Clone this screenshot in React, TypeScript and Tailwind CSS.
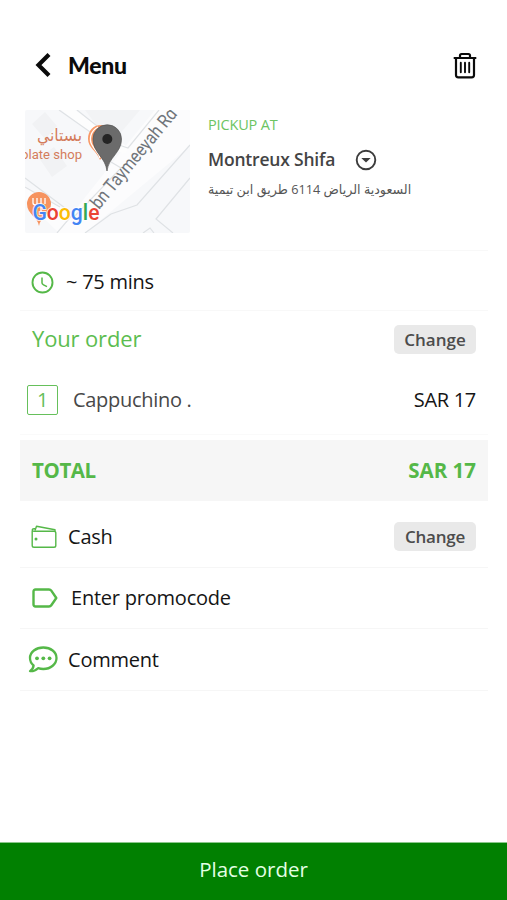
import type { ReactNode } from 'react';

const GREEN = '#55b848';

function BackIcon() {
  return (
    <svg width="18" height="26" viewBox="0 0 18 26" fill="none" stroke="#0b0b0b" strokeWidth="4.200">
      <path d="M15 2.500 4.500 13l10.500 10.500" />
    </svg>
  );
}

function TrashIcon() {
  return (
    <svg width="24" height="27" viewBox="0 0 24 27" fill="none" stroke="#0b0b0b" strokeWidth="2.200">
      <path d="M.7 6h22.600M7 6V3.600Q7 2 8.600 2h6.800Q17 2 17 3.600V6" />
      <path d="M3 6v17q0 2.300 2.300 2.300h13.400q2.300 0 2.300-2.300V6" />
      <path d="M7.800 10.800v9.400M12 10.800v9.400M16.200 10.800v9.400" strokeWidth="1.900" strokeLinecap="round" />
    </svg>
  );
}

function MapPreview() {
  return (
    <svg width="165" height="123" viewBox="0 0 165 123" className="rounded-xs" fontFamily='Roboto, "DejaVu Sans", sans-serif'>
      <rect width="165" height="123" fill="#f7f8fa" />
      <path d="M7 14 20 2l12 14-12 13zM14 48l15-11 13 19-15 11z" fill="#f1f2f4" />
      <path d="M60 0h55l-22 26-12 2z" fill="#f2f3f5" />
      <path d="M153 0h-23l-31 38-22 28-45 57h28L165 36V0z" fill="#fcfcfd" />
      <path d="M36 0h14l54 38-5 6-16-8z" fill="#fdfdfd" />
      <path d="M0 76 48 104 34 123 0 90z" fill="#fcfcfd" />
      <g fill="none" stroke="#dfe2e5" strokeWidth="1.200">
        <path d="M134 0 103 38 97 36 52 0M34 0l34 24M86 52l10 6-48 50M48 104 0 68M48 104 32 123M165 35 112 95 86 104 60 123M165 68 131 109 148 123M118 123l7-5 4 5M0 77l35 20" />
      </g>
      <g fill="#d47c5b">
        <text x="57" y="31" fontSize="17" textAnchor="end" textLength="45" lengthAdjust="spacingAndGlyphs" direction="ltr">بستاني</text>
        <text x="-4" y="49" fontSize="12.500" textLength="61" lengthAdjust="spacingAndGlyphs">olate shop</text>
      </g>
      <path d="M76 15c-8 0-13 6-13 14 0 9 9 12 12 21l8-10V16z" fill="#f89a68" />
      <path d="M73 17c-8 4-9 13-6 18 3 6 7 8 8 13" fill="none" stroke="#fff" strokeWidth="1.300" />
      <text transform="translate(74 100) rotate(-50.500)" fontSize="18.500" fill="#70757a" textLength="124" lengthAdjust="spacingAndGlyphs">bn Taymeeyah Rd</text>
      <path d="M82 61c-1.500-14-14-18-14-32a14 14 0 0 1 28.500 0C96.500 43 83.500 47 82 61z" fill="#6b6b6b" stroke="#555" strokeWidth=".7" />
      <circle cx="82.300" cy="29" r="5" fill="#242424" />
      <path d="M14 116c-1-9-12-12-12-22a12 12 0 0 1 24 0c0 10-11 13-12 22z" fill="#f6935f" />
      <path d="M8 88v5q0 2 3 2v7M12 88v6M16 88v14M20 88v6" stroke="#fff" strokeWidth="1.300" fill="none" />
      <text x="7.500" y="109.500" fontSize="22.500" fontWeight="500" textLength="67" lengthAdjust="spacingAndGlyphs" stroke="#fff" strokeWidth="2" strokeOpacity=".8" paintOrder="stroke">
        <tspan fill="#4285f4">G</tspan><tspan fill="#ea4335">o</tspan><tspan fill="#fbbc05">o</tspan><tspan fill="#4285f4">g</tspan><tspan fill="#34a853">l</tspan><tspan fill="#ea4335">e</tspan>
      </text>
    </svg>
  );
}

function DropdownIcon() {
  return (
    <svg width="22" height="22" viewBox="0 0 22 22">
      <circle cx="11" cy="11" r="9.300" fill="none" stroke="#3c3c3c" strokeWidth="1.900" />
      <path d="M6.300 9h9.400L11 13.600z" fill="#3c3c3c" />
    </svg>
  );
}

function ClockIcon() {
  return (
    <svg width="23" height="23" viewBox="0 0 23 23" fill="none" stroke={GREEN} strokeWidth="1.900">
      <circle cx="11.500" cy="11.500" r="10" />
      <path d="M11 6.500v5.500q0 1 1.500 1.800l3.500 1.800" strokeWidth="1.500" />
    </svg>
  );
}

function WalletIcon() {
  return (
    <svg width="26" height="24" viewBox="0 0 26 24" fill="none" stroke={GREEN} strokeWidth="1.400" strokeLinejoin="round">
      <path d="M1.200 6v14.500q0 1.800 1.800 1.800h20q1.800 0 1.800-1.800V8q0-1.800-1.800-1.800H3Q1.200 6.200 1.200 5t1.800-1.200h1" />
      <path d="M4 5.500 5.500 1.200l18.500 3.600v1.700" />
      <circle cx="5" cy="14" r="1.500" fill={GREEN} stroke="none" />
    </svg>
  );
}

function TagIcon() {
  return (
    <svg width="26" height="20" viewBox="0 0 26 20" fill="none" stroke={GREEN} strokeWidth="2.400" strokeLinejoin="round">
      <path d="M3.500 1.500h13.500q1.500 0 2.300 1.200L24.300 10l-5 7.300q-.8 1.200-2.300 1.200h-13.500q-2 0-2-2v-13q0-2 2-2z" />
    </svg>
  );
}

function CommentIcon() {
  return (
    <svg width="30" height="27" viewBox="0 0 30 27" fill="none" stroke={GREEN} strokeWidth="2.300" strokeLinejoin="round">
      <path d="M15.300 1.500C8 1.500 2 6 2 12c0 3 1.300 5.600 3.600 7.500-.3 2.500-1.500 4.300-3.600 5.700 3.500.2 6-1 8-3 1.700.5 3.400.8 5.300.8C22.800 23 28.500 18 28.500 12S22.800 1.500 15.300 1.500z" />
      <g fill={GREEN} stroke="none">
        <circle cx="9" cy="12.300" r="1.900" />
        <circle cx="15.300" cy="12.300" r="1.900" />
        <circle cx="21.600" cy="12.300" r="1.900" />
      </g>
    </svg>
  );
}

function ChangeButton() {
  return (
    <button className="h-[29px] w-[82px] rounded-[5px] bg-[#e9e9e9] text-[17px] font-semibold text-[#4c4c4c]">
      Change
    </button>
  );
}

function Option({ icon, iconClass, children, action }: { icon: ReactNode; iconClass: string; children: ReactNode; action?: ReactNode }) {
  return (
    <div className="flex h-[62px] items-center justify-between border-b border-[#f6f6f6] pr-3 text-[20px] tracking-[-0.22px] text-[#151515]">
      <div className="flex items-center">
        <span className={iconClass}>{icon}</span>
        <span>{children}</span>
      </div>
      {action}
    </div>
  );
}

export default function App() {
  return (
    <div className="flex h-[900px] w-[507px] flex-col bg-white font-['Open_Sans','DejaVu_Sans',sans-serif] leading-none whitespace-nowrap">
      <header className="flex h-[110px] items-center justify-between pt-5 pr-[30px] pl-[34px]">
        <button className="flex items-center gap-[16px] font-[Lato,sans-serif] text-[23px] font-black tracking-[-0.3px] text-[#0b0b0b]">
          <BackIcon />
          <span>Menu</span>
        </button>
        <button aria-label="Delete order"><TrashIcon /></button>
      </header>

      <main className="flex-1 pr-[19px] pl-5">
        <section className="flex h-[141px] border-b border-[#f8f8f8] pl-[5px]">
          <MapPreview />
          <div className="flex flex-col pl-[18px]">
            <p className="pt-2 text-[14.500px] tracking-[-0.15px] text-[#6cc462]">PICKUP AT</p>
            <div className="flex items-center gap-5 pt-4 text-[17.500px] font-semibold tracking-[-0.2px] text-[#444]">
              <span>Montreux Shifa</span>
              <DropdownIcon />
            </div>
            <p className="pt-3 text-[12.700px] text-[#555]">السعودية الرياض 6114 طريق ابن تيمية</p>
          </div>
        </section>

        <section className="flex h-[60px] items-center gap-3 border-b border-[#f8f8f8] pt-[3px] pl-[11px] text-[20px] tracking-[-0.25px] text-[#151515]">
          <ClockIcon />
          <span>~ 75 mins</span>
        </section>

        <section className="h-[124px] border-b border-[#fafafa]">
          <div className="flex h-[57px] items-center justify-between pr-3 pb-px pl-3">
            <h2 className="pb-[2px] text-[22px] tracking-[-0.15px] text-[#5cbd50]">Your order</h2>
            <ChangeButton />
          </div>
          <div className="flex h-[64px] items-center pr-3 pl-[7px] text-[20px] tracking-[-0.3px]">
            <span className="flex h-[30px] w-[31px] items-center justify-center rounded-[2px] border-[1.500px] border-[#66c05b] text-[#66c05b]">1</span>
            <span className="pl-[15px] text-[#484848]">Cappuchino .</span>
            <span className="ml-auto text-[#151515]">SAR 17</span>
          </div>
        </section>

        <section className="mt-[5px] flex h-[61px] items-center justify-between bg-[#f6f6f6] pr-3 pl-3 text-[20.500px] font-bold text-[#55b848]">
          <span className="tracking-[-0.4px]">TOTAL</span>
          <span>SAR 17</span>
        </section>

        <section className="pt-[5px]">
          <Option icon={<WalletIcon />} iconClass="w-12 pl-[11px]" action={<ChangeButton />}>Cash</Option>
          <div className="-mt-px">
            <Option icon={<TagIcon />} iconClass="w-[51px] pl-3">Enter promocode</Option>
            <Option icon={<CommentIcon />} iconClass="w-12 pl-2">Comment</Option>
          </div>
        </section>
      </main>

      <button className="h-[58px] border-t border-[#8bc78b] bg-[#018001] pb-1 text-[20.500px] text-[#e4ffe4]">Place order</button>
    </div>
  );
}
